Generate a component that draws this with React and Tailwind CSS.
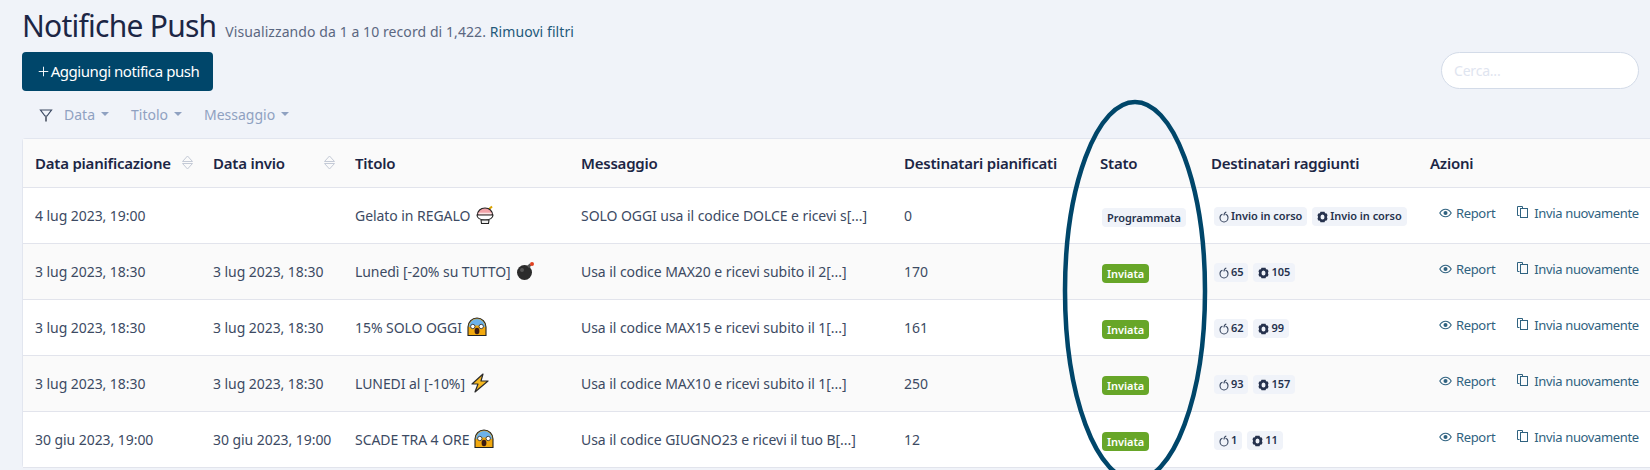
import { Plus } from 'lucide-react';

const font = { fontFamily: '"Noto Sans", sans-serif' };

const rows = [
  { plan: '4 lug 2023, 19:00', sent: '', title: 'Gelato in REGALO', emoji: 'ice', msg: 'SOLO OGGI usa il codice DOLCE e ricevi s[...]', dest: '0', status: 'Programmata', ios: 'Invio in corso', android: 'Invio in corso' },
  { plan: '3 lug 2023, 18:30', sent: '3 lug 2023, 18:30', title: 'Lunedì [-20% su TUTTO]', emoji: 'bomb', msg: 'Usa il codice MAX20 e ricevi subito il 2[...]', dest: '170', status: 'Inviata', ios: '65', android: '105' },
  { plan: '3 lug 2023, 18:30', sent: '3 lug 2023, 18:30', title: '15% SOLO OGGI', emoji: 'scream', msg: 'Usa il codice MAX15 e ricevi subito il 1[...]', dest: '161', status: 'Inviata', ios: '62', android: '99' },
  { plan: '3 lug 2023, 18:30', sent: '3 lug 2023, 18:30', title: 'LUNEDI al [-10%]', emoji: 'bolt', msg: 'Usa il codice MAX10 e ricevi subito il 1[...]', dest: '250', status: 'Inviata', ios: '93', android: '157' },
  { plan: '30 giu 2023, 19:00', sent: '30 giu 2023, 19:00', title: 'SCADE TRA 4 ORE', emoji: 'scream', msg: 'Usa il codice GIUGNO23 e ricevi il tuo B[...]', dest: '12', status: 'Inviata', ios: '1', android: '11' },
];

const Emoji = ({ name }) => {
  if (name === 'ice') {
    return (
      <svg width="20" height="20" viewBox="0 0 20 20" className="inline-block">
        <path d="M13 5l4-3.5" stroke="#d9a300" strokeWidth="2" />
        <path d="M2.500 10c0-4 3-7 7.500-7s7.500 3 7.500 7z" fill="#f2a3a8" stroke="#222" strokeWidth="1.100" />
        <path d="M2 10h16c0 3-3 5-8 5s-8-2-8-5z" fill="#fff" stroke="#222" strokeWidth="1.100" />
        <path d="M3.500 8.500h13" stroke="#fbe3e3" strokeWidth="1.600" />
        <path d="M6 15h8l-.5 3.500h-7z" fill="#eee" stroke="#222" strokeWidth="1.100" />
      </svg>
    );
  }
  if (name === 'bomb') {
    return (
      <svg width="20" height="20" viewBox="0 0 20 20" className="inline-block">
        <circle cx="8.500" cy="11.500" r="7.500" fill="#2b2b2b" />
        <circle cx="6" cy="9" r="2" fill="#555" />
        <path d="M12 6l2.500-2.500" stroke="#555" strokeWidth="2.600" />
        <circle cx="16" cy="3" r="2" fill="#e0401f" />
      </svg>
    );
  }
  if (name === 'bolt') {
    return (
      <svg width="20" height="20" viewBox="0 0 20 20" className="inline-block">
        <path d="M13 1L2 11h6l-3 8 13-11h-7z" fill="#f6b81f" stroke="#2b2b2b" strokeWidth="1.200" strokeLinejoin="round" />
      </svg>
    );
  }
  return (
    <svg width="20" height="20" viewBox="0 0 20 20" className="inline-block">
      <path d="M1 18.500V10a9 9 0 0118 0v8.500z" fill="#f2a90f" stroke="#222" strokeWidth="1.100" />
      <path d="M2 10a8 8 0 0116 0c-2 0-3-1.500-8-1.500S4 10 2 10z" fill="#6cb2ea" />
      <circle cx="5.800" cy="9.500" r="2.200" fill="#fff" stroke="#222" strokeWidth=".8" />
      <circle cx="14.200" cy="9.500" r="2.200" fill="#fff" stroke="#222" strokeWidth=".8" />
      <ellipse cx="10" cy="14" rx="2.400" ry="3.200" fill="#3a1a10" />
    </svg>
  );
};

const SortIcon = () => (
  <svg width="13" height="15" viewBox="0 0 13 15" className="shrink-0 -mr-[5px]">
    <path d="M6.500 1L11.500 6.500H1.500z" fill="none" stroke="#c4cad6" strokeWidth="1" />
    <path d="M6.500 14L11.500 8.500H1.500z" fill="none" stroke="#c4cad6" strokeWidth="1" />
  </svg>
);

const AppleIcon = () => (
  <svg width="10" height="12" viewBox="0 0 10 12" className="shrink-0">
    <path d="M3.500 3.300C1.800 3.700 1 5.200 1 6.800c0 2.200 1.700 4.200 4 4.200s4-2 4-4.200C9 5.200 8.200 3.700 6.500 3.300" fill="none" stroke="#3c4a63" strokeWidth="1.100" />
    <path d="M5 4.500c0-1.700.8-3 2.300-3.500" fill="none" stroke="#3c4a63" strokeWidth="1.100" />
  </svg>
);

const GearIcon = () => (
  <svg width="11" height="12" viewBox="0 0 11 12" className="shrink-0">
    <path d="M3.500.8h4l.6 1.400 1.600.4.8 1.600-.6 1.800.6 1.800-.8 1.600-1.600.4-.6 1.400h-4l-.6-1.400-1.600-.4L.5 7.800l.6-1.800-.6-1.800.8-1.600 1.600-.4z" fill="#26324d" />
    <ellipse cx="5.500" cy="6" rx="2" ry="2.600" fill="#f0f3f9" />
  </svg>
);

const EyeIcon = () => (
  <svg width="13" height="10" viewBox="0 0 13 10" className="shrink-0 mr-[4px] mb-[2px]">
    <path d="M.8 5C2.200 2.500 4.200 1.200 6.500 1.200S10.800 2.500 12.200 5C10.800 7.500 8.800 8.800 6.500 8.800S2.200 7.500.8 5z" fill="none" stroke="#2f6280" strokeWidth="1.100" />
    <circle cx="6.500" cy="5" r="2" fill="#2f6280" />
  </svg>
);

const CopyIcon = () => (
  <svg width="13" height="14" viewBox="0 0 13 14" className="shrink-0 mb-[3px]" fill="none" stroke="#2f6280" strokeWidth="1">
    <path d="M3.500 10.500H1.500V1.500h5v2" />
    <rect x="4.500" y="3.500" width="7" height="9" />
  </svg>
);

const Caret = () => <span className="ml-[6px] w-0 h-0 border-x-[4px] border-x-transparent border-t-[4px] border-t-[#8fa1c1]" />;

const Chip = ({ icon, text }) => (
  <span className="inline-flex items-center h-[19px] px-[5px] rounded bg-[#f0f3f9] text-[11px] font-semibold text-[#26324d] whitespace-nowrap">
    {icon}
    <span className="ml-[2px]">{text}</span>
  </span>
);

const Head = ({ children, sort }) => (
  <th className="px-3 text-left font-semibold text-[#1c2645] text-[15px] tracking-[-0.22px] whitespace-nowrap">
    <div className="flex items-center justify-between">
      <span>{children}</span>
      {sort && <SortIcon />}
    </div>
  </th>
);

export default function App() {
  return (
    <div className="relative h-[470px] w-[1650px] overflow-hidden bg-[#f0f3f9] pl-[22px] pt-[4px]" style={font}>
      <div className="flex items-baseline h-[44px]">
        <h1 className="text-[30px] leading-[44px] text-[#1c2645] tracking-[-0.75px]">Notifiche Push</h1>
        <span className="ml-[9px] text-[14px] text-[#5b6781] tracking-[0.08px]">
          Visualizzando da 1 a 10 record di 1,422. <a className="text-[#23597a]">Rimuovi filtri</a>
        </span>
      </div>

      <div className="flex items-start justify-between pr-[11px] mt-[4px] h-[41px]">
        <button className="flex items-center h-[39px] w-[191px] justify-center rounded bg-[#00466a] text-white text-[15px] tracking-[-0.45px]">
          <Plus size={15} strokeWidth={1.5} />
          <span>Aggiungi notifica push</span>
        </button>
        <div className="flex items-center w-[198px] h-[37px] rounded-full bg-white border border-[#d3dbe8] pl-[12px] text-[14px] text-[#dfe5f0] tracking-[-0.2px]">
          Cerca...
        </div>
      </div>

      <div className="flex items-center h-[40px] mt-[1px] pl-[17px] text-[14px] text-[#8fa1c1]">
        <svg width="14" height="15" viewBox="0 0 14 15" fill="none" strokeWidth="1.200" className="mr-[11px] mt-[3px]">
          <path d="M1.500 2h11L8 8v0H6z" stroke="#3c4a63" />
          <path d="M7 8v5.500" stroke="#6b7280" strokeWidth="2" />
        </svg>
        <span className="flex items-center mr-[22px]">Data<Caret /></span>
        <span className="flex items-center mr-[22px]">Titolo<Caret /></span>
        <span className="flex items-center">Messaggio<Caret /></span>
      </div>

      <div className="w-[1700px] rounded border border-[#e2e6ef] border-b-0 bg-white mt-[4px]">
        <table className="w-full table-fixed border-collapse text-[14px] text-[#3c4a63] tracking-[-0.06px] whitespace-nowrap">
          <colgroup>
            <col className="w-[178px]" />
            <col className="w-[142px]" />
            <col className="w-[226px]" />
            <col className="w-[323px]" />
            <col className="w-[196px]" />
            <col className="w-[111px]" />
            <col className="w-[219px]" />
            <col />
          </colgroup>
          <thead>
            <tr className="h-[48px] bg-[#fafafa] border-b border-[#e2e4ec]">
              <Head sort>Data pianificazione</Head>
              <Head sort>Data invio</Head>
              <Head>Titolo</Head>
              <Head>Messaggio</Head>
              <Head>Destinatari pianificati</Head>
              <Head>Stato</Head>
              <Head>Destinatari raggiunti</Head>
              <Head>Azioni</Head>
            </tr>
          </thead>
          <tbody>
            {rows.map((r, i) => (
              <tr key={i} className={`h-[56px] border-b border-[#e2e4ec] ${i % 2 ? 'bg-[#fafafa]' : 'bg-white'}`}>
                <td className="px-3">{r.plan}</td>
                <td className="px-3">{r.sent}</td>
                <td className="px-3">
                  <span className="flex items-center gap-[5px]">{r.title}<Emoji name={r.emoji} /></span>
                </td>
                <td className="px-3">{r.msg}</td>
                <td className="px-3">{r.dest}</td>
                <td className="px-3 pt-[3px]">
                  <span className={`ml-[2px] inline-flex items-center h-[19px] px-[5px] rounded text-[11px] font-semibold tracking-[-0.05px] ${r.status === 'Inviata' ? 'bg-[#67a628] text-white' : 'bg-[#f0f3f9] text-[#26324d]'}`}>{r.status}</span>
                </td>
                <td className="px-3 pt-[3px]">
                  <div className="ml-[3px] flex gap-[5px]">
                    <Chip icon={<AppleIcon />} text={r.ios} />
                    <Chip icon={<GearIcon />} text={r.android} />
                  </div>
                </td>
                <td className="px-3 pb-[3px]">
                  <div className="flex items-center text-[13px] text-[#2f6280] tracking-[-0.35px] pl-[9px]">
                    <EyeIcon />
                    <span>Report</span>
                    <span className="ml-[21px] mr-[5px]"><CopyIcon /></span>
                    <span>Invia nuovamente</span>
                  </div>
                </td>
              </tr>
            ))}
          </tbody>
        </table>
      </div>

      <svg width="160" height="400" viewBox="0 0 160 400" className="absolute left-[1055px] top-[95px]">
        <ellipse cx="80" cy="196" rx="70" ry="189" fill="none" stroke="#00466a" strokeWidth="4.500" />
      </svg>
    </div>
  );
}
